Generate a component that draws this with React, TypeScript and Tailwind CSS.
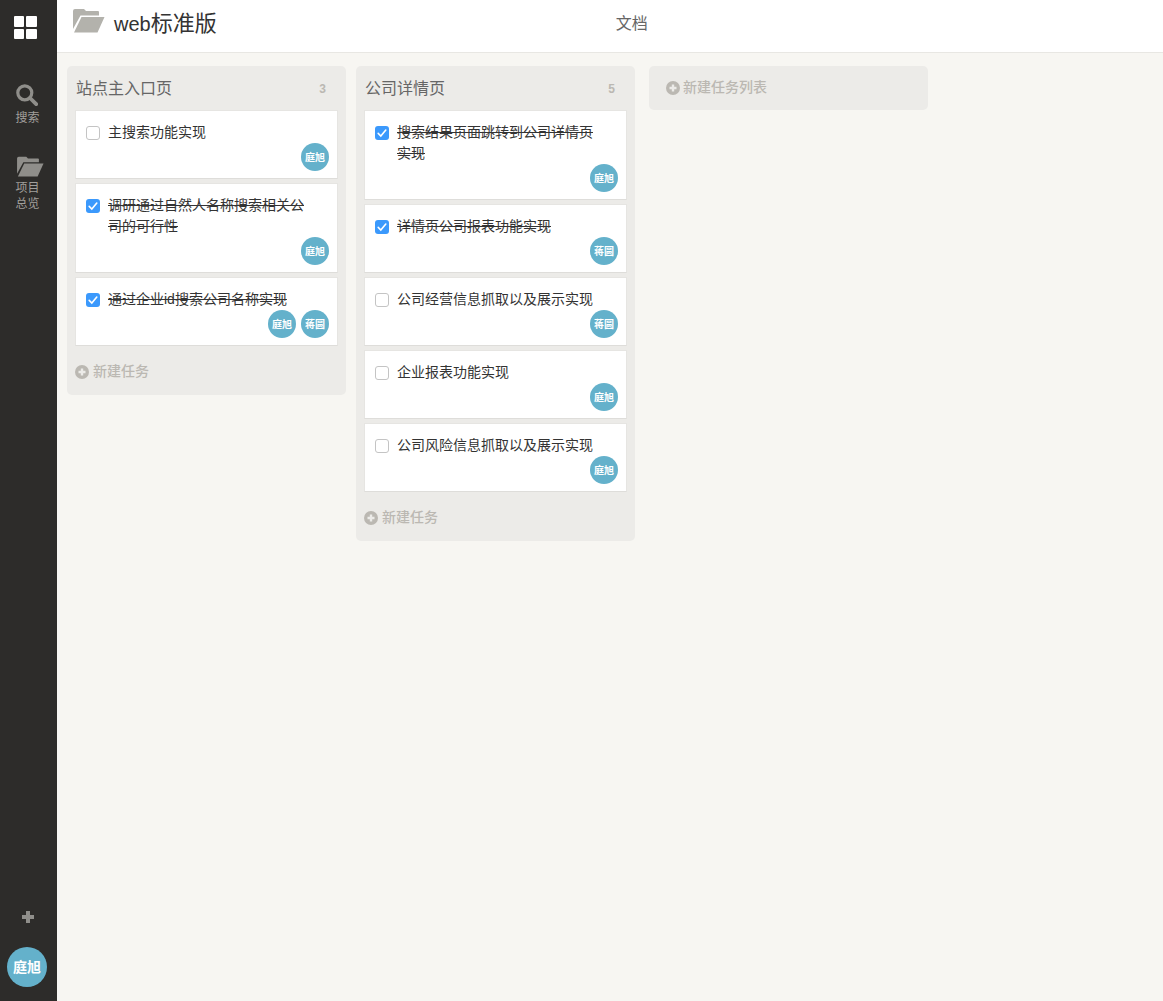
import React from "react";

const FONT = "font-['Helvetica_Neue','Liberation_Sans','Noto_Sans_CJK_SC',sans-serif]";

function FolderIcon({ className }: { className?: string }) {
  return (
    <svg viewBox="0 0 32 25" className={className} fill="currentColor" aria-hidden="true">
      <path d="M0 3Q0 1 2 1H11L13 3H25Q26 3 26 4V7.5H7.5L0 21Z" />
      <path d="M8.5 9H31.5L24.5 24.5H1Z" />
    </svg>
  );
}

function SearchIcon({ className }: { className?: string }) {
  return (
    <svg viewBox="0 0 22 22" className={className} aria-hidden="true">
      <circle cx="8.8" cy="8.8" r="7" fill="none" stroke="currentColor" strokeWidth="3.2" />
      <path d="M14 14l6.2 6.2" stroke="currentColor" strokeWidth="3.8" strokeLinecap="round" />
    </svg>
  );
}

function PlusCircle({ className }: { className?: string }) {
  return (
    <svg viewBox="0 0 14 14" className={className} aria-hidden="true">
      <circle cx="7" cy="7" r="7" fill="currentColor" />
      <path d="M7 3.5v7M3.5 7h7" stroke="#ecebe8" strokeWidth="2.4" />
    </svg>
  );
}

function Avatar({ name }: { name: string }) {
  return (
    <div className="flex h-7 w-7 items-center justify-center rounded-full bg-[#64b1cb] text-[10px] font-bold text-white">
      {name}
    </div>
  );
}

function Checkbox({ checked }: { checked: boolean }) {
  if (checked) {
    return (
      <div className="mt-[4px] flex h-[14px] w-[14px] shrink-0 items-center justify-center rounded-[3px] bg-[#3b99fc]">
        <svg viewBox="0 0 14 14" className="h-[14px] w-[14px]" aria-hidden="true">
          <path d="M3.2 7.4l2.6 2.6 5-6" fill="none" stroke="#fff" strokeWidth="1.6" strokeLinecap="round" />
        </svg>
      </div>
    );
  }
  return <div className="mt-[4px] h-[14px] w-[14px] shrink-0 rounded-[3px] border border-[#c4c4c4] bg-white" />;
}

type Task = { text: string; done: boolean; people: string[] };

function Card({ task }: { task: Task }) {
  return (
    <div className="border border-[#e6e5e2] border-b-[#deddda] bg-white pl-[10px] pr-[8px] pt-[11px] pb-[7px]">
      <div className="flex gap-2">
        <Checkbox checked={task.done} />
        <div className={`max-w-[200px] text-[14px] leading-[21px] text-[#333333] ${task.done ? "line-through" : ""}`}>
          {task.text}
        </div>
      </div>
      <div className="flex justify-end gap-[5px]">
        {task.people.map((p, i) => (
          <Avatar key={i} name={p} />
        ))}
      </div>
    </div>
  );
}

function Column({ title, tasks }: { title: string; tasks: Task[] }) {
  return (
    <div className="w-[279px] rounded-[5px] bg-[#ecebe8] px-2">
      <div className="flex h-11 items-center justify-between pl-[1px] pr-[12px] pt-[1px]">
        <div className="text-[16px] text-[#666666]">{title}</div>
        <div className="text-[12px] font-bold text-[#bbb8b2]">{tasks.length}</div>
      </div>
      <div className="flex flex-col gap-1">
        {tasks.map((t, i) => (
          <Card key={i} task={t} />
        ))}
      </div>
      <div className="flex h-[49px] items-center gap-[4px] pt-[2px] text-[14px] font-medium text-[#bbb8b2]">
        <PlusCircle className="h-[14px] w-[14px]" />
        <span>新建任务</span>
      </div>
    </div>
  );
}

const col1: Task[] = [
  { text: "主搜索功能实现", done: false, people: ["庭旭"] },
  { text: "调研通过自然人名称搜索相关公司的可行性", done: true, people: ["庭旭"] },
  { text: "通过企业id搜索公司名称实现", done: true, people: ["庭旭", "蒋圆"] },
];

const col2: Task[] = [
  { text: "搜索结果页面跳转到公司详情页实现", done: true, people: ["庭旭"] },
  { text: "详情页公司报表功能实现", done: true, people: ["蒋圆"] },
  { text: "公司经营信息抓取以及展示实现", done: false, people: ["蒋圆"] },
  { text: "企业报表功能实现", done: false, people: ["庭旭"] },
  { text: "公司风险信息抓取以及展示实现", done: false, people: ["庭旭"] },
];

export default function App() {
  return (
    <div className={`flex h-[1001px] w-full overflow-hidden bg-[#f7f6f2] ${FONT}`}>
      <aside className="flex w-[57px] shrink-0 flex-col items-center justify-between bg-[#2d2c2a] pr-[3px] pb-[14px]">
        <div className="flex flex-col items-center">
          <div className="mt-4 mr-[4px] grid h-[23px] w-[23px] grid-cols-2 gap-[2px]">
            <div className="rounded-[1px] bg-white" />
            <div className="rounded-[1px] bg-white" />
            <div className="rounded-[1px] bg-white" />
            <div className="rounded-[1px] bg-white" />
          </div>
          <SearchIcon className="mt-[45px] mr-[1px] h-[22px] w-[22px] text-[#8f8e8a]" />
          <div className="mt-1 ml-[1px] text-[12px] leading-[16px] text-[#a19f9b]">搜索</div>
          <FolderIcon className="mt-[30px] ml-[7px] h-[21px] w-[27px] text-[#8f8e8a]" />
          <div className="mt-[3px] ml-[1px] w-[24px] text-center text-[12px] leading-[16px] text-[#a19f9b]">项目总览</div>
        </div>
        <div className="flex flex-col items-center">
          <svg viewBox="0 0 14 14" className="ml-[1px] h-[14px] w-[14px] text-[#8f8e8a]" aria-hidden="true">
            <path d="M7 1v12M1 7h12" stroke="currentColor" strokeWidth="4" />
          </svg>
          <div className="mt-[23px] flex h-10 w-10 items-center justify-center rounded-full bg-[#64b1cb] text-[14px] font-bold text-white">
            庭旭
          </div>
        </div>
      </aside>
      <main className="flex min-w-0 flex-1 flex-col">
        <header className="flex h-[53px] shrink-0 items-center border-b border-[#e8e7e3] bg-white pl-4">
          <FolderIcon className="mb-[12px] h-[25px] w-[32px] text-[#b3b2ac]" />
          <div className="-mt-[5px] ml-[9px] text-[22px] text-[#333333]">
            <span className="text-[20px]">web</span>标准版
          </div>
          <div className="-mt-[5px] ml-[399px] text-[16px] text-[#666666]">文档</div>
        </header>
        <div className="flex items-start gap-[10px] pl-[10px] pt-[13px]">
          <Column title="站点主入口页" tasks={col1} />
          <Column title="公司详情页" tasks={col2} />
          <div className="ml-1 flex h-11 w-[279px] items-center gap-[3px] rounded-[5px] bg-[#ecebe8] pb-[1px] pl-[17px] text-[14px] font-medium text-[#bbb8b2]">
            <PlusCircle className="h-[14px] w-[14px]" />
            <span>新建任务列表</span>
          </div>
        </div>
      </main>
    </div>
  );
}
